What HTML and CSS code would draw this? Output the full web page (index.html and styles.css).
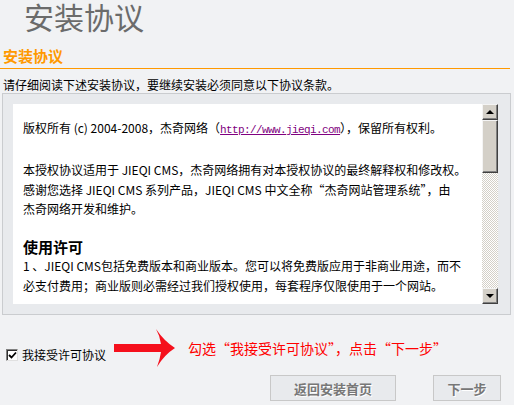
FILE: index.html
```html
<!DOCTYPE html>
<html>
    <head>
        <meta charset="utf-8">
        <title>安装协议</title>
        <link rel="stylesheet" href="styles.css">
    </head>
    <body>

        <h1 class="page-title">安装协议</h1>

        <div class="section-head">安装协议</div>

        <p class="intro">请仔细阅读下述安装协议，要继续安装必须同意以下协议条款。</p>

        <div class="license-box">
            <div class="license-frame">
                <div class="license-text">
                    <p>版权所有 (c) 2004-2008，杰奇网络（<a class="site-link" href="#">http://www.jieqi.com</a>），保留所有权利。</p>
                    <p>本授权协议适用于 JIEQI CMS，杰奇网络拥有对本授权协议的最终解释权和修改权。<br>
                    感谢您选择 JIEQI CMS 系列产品，JIEQI CMS 中文全称“杰奇网站管理系统”，由<br>
                    杰奇网络开发和维护。</p>
                    <h3>使用许可</h3>
                    <p>1 、JIEQI CMS包括免费版本和商业版本。您可以将免费版应用于非商业用途，而不<br>
                    必支付费用；商业版则必需经过我们授权使用，每套程序仅限使用于一个网站。</p>
                </div>
                <div class="scrollbar">
                    <div class="sb-btn"><span class="arrow-up"></span></div>
                    <div class="sb-thumb"></div>
                    <div class="sb-track"></div>
                    <div class="sb-btn"><span class="arrow-down"></span></div>
                </div>
            </div>
        </div>

        <div class="accept-row">
            <label class="accept">
                <span class="check-box">
                    <svg width="9" height="9" viewBox="0 0 9 9">
                        <path d="M1 4 L3.5 6.5 L8 1.5" fill="none" stroke="#000" stroke-width="1.8"/>
                    </svg>
                </span>
                我接受许可协议
            </label>

            <svg class="red-arrow" width="62" height="40" viewBox="0 0 62 40">
                <path d="M0 16 L47 16 Q46 8 42 1 Q50 13 61 20 Q50 27 43 39 Q46 31 47 24 L0 24 Z" fill="#f5101c"/>
            </svg>

            <span class="hint">勾选“我接受许可协议”，点击“下一步”</span>
        </div>

        <div class="buttons">
            <button class="step-button wide">返回安装首页</button>
            <button class="step-button">下一步</button>
        </div>

    </body>
</html>
```

FILE: styles.css
```css
body {
    margin: 0;
    background-color: #f1f2f4;
    color: #000;
    font-family: "Noto Sans CJK SC", "Liberation Sans", sans-serif;
    font-size: 12px;
}

.page-title {
    margin: 0 0 0 24px;
    font-size: 30px;
    line-height: 32px;
    font-weight: normal;
    color: #6b6b6b;
}

.section-head {
    margin: 14px 4px 0 0;
    padding: 0 0 2px 3px;
    font-size: 15px;
    line-height: 20px;
    font-weight: bold;
    color: #ff9900;
    border-bottom: 1px solid #ff9900;
}

.intro {
    margin: 8px 0 0 3px;
    line-height: 16px;
}

.license-box {
    margin-left: 2px;
    width: 487px;
    padding: 10px;
    background-color: #e8eaed;
    border: 1px solid #cacccf;
}

.license-frame {
    display: flex;
    height: 200px;
    width: 485px;
    background-color: #fff;
}

.license-text {
    flex: 1;
    overflow: hidden;
    padding: 14px 10px 0 10px;
    line-height: 19.5px;
    white-space: nowrap;
}

.license-text p {
    margin: 0 0 19.5px 0;
}

.license-text h3 {
    margin: 0;
    font-size: 15px;
    line-height: 18px;
}

.site-link {
    color: #800080;
    font-family: "Liberation Mono", monospace;
    font-size: 11px;
    letter-spacing: -0.6px;
}

.scrollbar {
    width: 16px;
    display: flex;
    flex-direction: column;
}

.sb-btn,
.sb-thumb {
    box-sizing: border-box;
    background-color: #d4d0c8;
    border: 1px solid;
    border-color: #f4f4f4 #404040 #404040 #f4f4f4;
    box-shadow: inset -1px -1px #808080;
}

.sb-btn {
    height: 16px;
    display: flex;
    align-items: center;
    justify-content: center;
}

.sb-thumb {
    height: 53px;
}

.sb-track {
    flex: 1;
    background-image: repeating-conic-gradient(#d4d0c8 0 25%, #fff 0 50%);
    background-size: 2px 2px;
}

.arrow-up {
    border-left: 4px solid transparent;
    border-right: 4px solid transparent;
    border-bottom: 4px solid #000;
}

.arrow-down {
    border-left: 4px solid transparent;
    border-right: 4px solid transparent;
    border-top: 4px solid #000;
}

.accept-row {
    display: flex;
    align-items: center;
    height: 40px;
    margin-top: 13px;
}

.accept {
    display: flex;
    align-items: center;
    margin: 14px 0 0 6px;
    line-height: 16px;
}

.check-box {
    box-sizing: border-box;
    width: 12px;
    height: 12px;
    margin-right: 4px;
    display: flex;
    align-items: center;
    justify-content: center;
    background-color: #fff;
    border: 1px solid;
    border-color: #808080 #e0e0e0 #e0e0e0 #808080;
    box-shadow: inset 1px 1px #303030;
}

.red-arrow {
    margin-left: 8px;
}

.hint {
    margin-left: 12px;
    font-size: 14px;
    color: #ff0000;
}

.buttons {
    display: flex;
    justify-content: flex-end;
    gap: 37px;
    margin-top: 7px;
    padding-right: 13px;
}

.step-button {
    height: 26px;
    width: 68px;
    padding: 0;
    background-color: #e8eaed;
    border: 1px solid #c8c8c8;
    color: #777;
    font-family: "Noto Sans CJK SC", sans-serif;
    font-size: 13px;
    font-weight: bold;
    text-shadow: 1px 1px 0 #fff;
    cursor: pointer;
}

.step-button.wide {
    width: 126px;
}
```
